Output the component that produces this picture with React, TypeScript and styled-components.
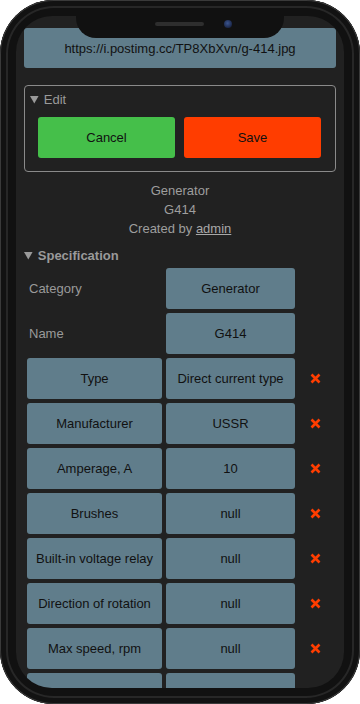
import React from 'react';
import styled, { createGlobalStyle } from 'styled-components';

interface SpecRow {
  label: string;
  value: string;
  plain?: boolean;
}

const rows: SpecRow[] = [
  { label: 'Category', value: 'Generator', plain: true },
  { label: 'Name', value: 'G414', plain: true },
  { label: 'Type', value: 'Direct current type' },
  { label: 'Manufacturer', value: 'USSR' },
  { label: 'Amperage, A', value: '10' },
  { label: 'Brushes', value: 'null' },
  { label: 'Built-in voltage relay', value: 'null' },
  { label: 'Direction of rotation', value: 'null' },
  { label: 'Max speed, rpm', value: 'null' },
  // last row sits under the screen edge, only its top shows
  { label: '', value: '' },
];

const GlobalStyle = createGlobalStyle`
  html, body {
    margin: 0;
    padding: 0;
    background: #ffffff;
  }
  body {
    font-family: "Liberation Sans", Arial, sans-serif;
    font-size: 13px;
  }
  * {
    box-sizing: border-box;
  }
`;

const Phone = styled.div`
  position: relative;
  width: 360px;
  height: 704px;
  padding: 16px;
  border-radius: 54px;
  background: #111111;
  box-shadow: inset 0 0 0 1px #3a3a3a, inset 0 0 0 6px #121212,
    inset 0 0 0 8px #272727;
`;

const Screen = styled.div`
  height: 100%;
  border-radius: 36px;
  background: #212121;
  overflow: hidden;
  padding: 12px 8px 0 8px;
`;

const Notch = styled.div`
  position: absolute;
  top: 16px;
  left: 76px;
  width: 208px;
  height: 22px;
  background: #111111;
  border-radius: 0 0 20px 20px;
`;

const Speaker = styled.div`
  position: absolute;
  top: 6px;
  left: 79px;
  width: 49px;
  height: 4px;
  border-radius: 3px;
  background: #2e2e2e;
`;

const Camera = styled.div`
  position: absolute;
  top: 4px;
  left: 148px;
  width: 8px;
  height: 8px;
  border-radius: 50%;
  background: radial-gradient(circle at 45% 40%, #3b5590 0%, #1b2748 70%);
`;

const UrlBox = styled.div`
  height: 40px;
  display: flex;
  align-items: center;
  justify-content: center;
  background: #607d8b;
  border-radius: 3px;
  color: #111111;
  font-size: 13px;
`;

const EditBox = styled.details`
  margin-top: 17px;
  border: 1px solid #8a8a8a;
  border-radius: 4px;
  padding: 6px 13px 13px 13px;
`;

const Summary = styled.summary<{ $bold?: boolean }>`
  cursor: pointer;
  color: #9a9a9a;
  font-size: 13px;
  line-height: 15px;
  font-weight: ${(p) => (p.$bold ? 700 : 400)};
`;

const EditSummary = styled(Summary)`
  margin-left: -8px;
`;

const ButtonRow = styled.div`
  display: flex;
  gap: 9px;
  margin-top: 10px;
`;

const ActionButton = styled.button<{ $tone: 'green' | 'red' }>`
  width: 137px;
  height: 41px;
  border: none;
  border-radius: 3px;
  background: ${(p) => (p.$tone === 'green' ? '#45bf4a' : '#ff3d00')};
  color: #111111;
  font-family: inherit;
  font-size: 13px;
`;

const Info = styled.div`
  margin-top: 9px;
  text-align: center;
  color: #9e9e9e;
  font-size: 13px;
  line-height: 19px;
`;

const Author = styled.a`
  color: #a8a8a8;
  text-decoration: underline;
`;

const SpecSection = styled.details`
  margin-top: 10px;
`;

const SpecGrid = styled.div`
  display: grid;
  grid-template-columns: 135px 129px 32px;
  grid-auto-rows: 41px;
  gap: 4px;
  margin-top: 5px;
  padding-left: 3px;
`;

const Cell = styled.div<{ $plain?: boolean }>`
  display: flex;
  align-items: center;
  justify-content: ${(p) => (p.$plain ? 'flex-start' : 'center')};
  padding: ${(p) => (p.$plain ? '0 0 0 2px' : '0 4px')};
  background: ${(p) => (p.$plain ? 'transparent' : '#607d8b')};
  color: ${(p) => (p.$plain ? '#9a9a9a' : '#111111')};
  border-radius: 3px;
  font-size: 13px;
  text-align: center;
  white-space: nowrap;
`;

const RemoveCell = styled.div`
  display: flex;
  align-items: center;
  justify-content: center;
`;

const RemoveIcon = () => (
  <svg width="11" height="11" viewBox="0 0 11 11">
    <path d="M1.5 1.5 L9.5 9.5 M9.5 1.5 L1.5 9.5" stroke="#ff3d00" strokeWidth="2.6" />
  </svg>
);

const App: React.FC = () => {
  return (
    <>
      <GlobalStyle />
      <Phone>
        <Screen>
          <UrlBox>https://i.postimg.cc/TP8XbXvn/g-414.jpg</UrlBox>
          <EditBox open>
            <EditSummary>Edit</EditSummary>
            <ButtonRow>
              <ActionButton $tone="green">Cancel</ActionButton>
              <ActionButton $tone="red">Save</ActionButton>
            </ButtonRow>
          </EditBox>
          <Info>
            <div>Generator</div>
            <div>G414</div>
            <div>
              Created by <Author href="#">admin</Author>
            </div>
          </Info>
          <SpecSection open>
            <Summary $bold>Specification</Summary>
            <SpecGrid>
              {rows.map((row, i) => (
                <React.Fragment key={i}>
                  <Cell $plain={row.plain}>{row.label}</Cell>
                  <Cell>{row.value}</Cell>
                  <RemoveCell>{row.plain ? null : <RemoveIcon />}</RemoveCell>
                </React.Fragment>
              ))}
            </SpecGrid>
          </SpecSection>
        </Screen>
        <Notch>
          <Speaker />
          <Camera />
        </Notch>
      </Phone>
    </>
  );
};

export default App;
